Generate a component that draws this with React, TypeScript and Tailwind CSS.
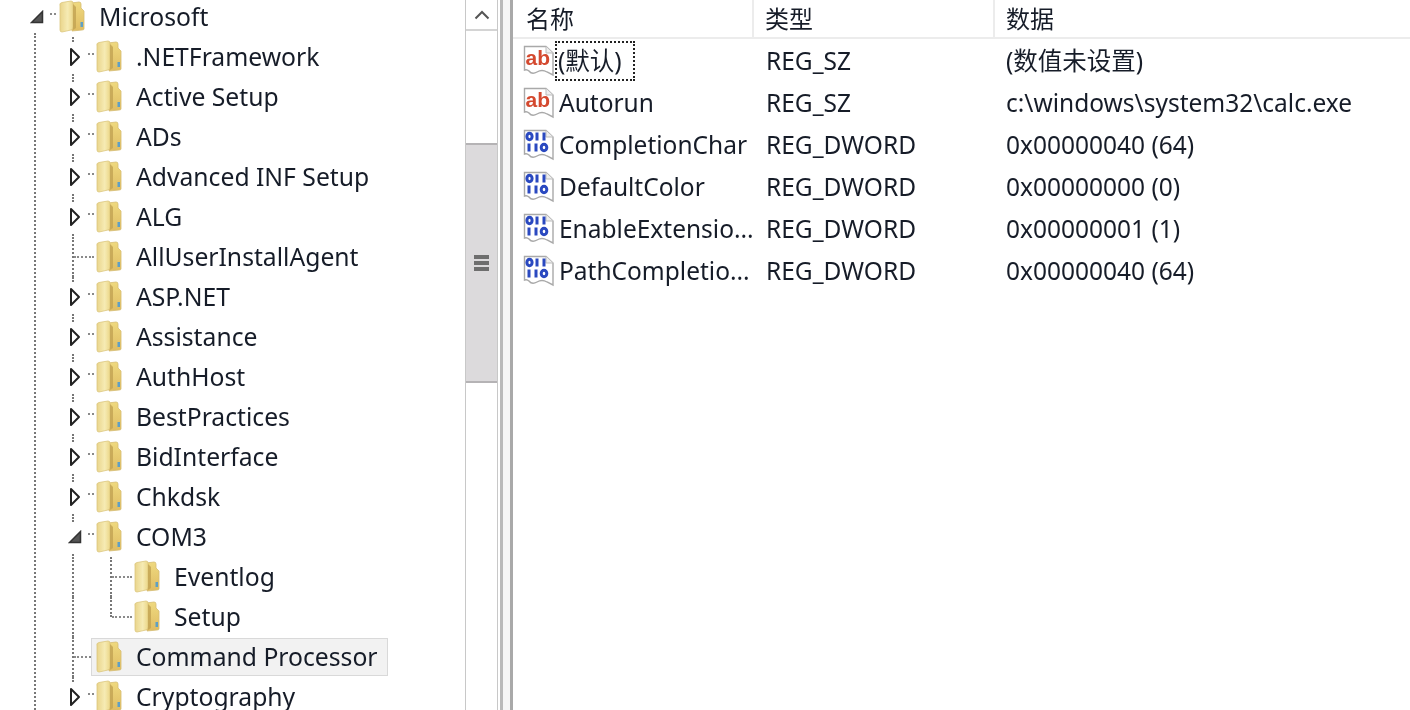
import { FC } from "react";

interface TreeRow {
  label: string;
  depth: number;
  expander?: "open" | "closed";
  selected?: boolean;
  last?: boolean;
}

const treeRows: TreeRow[] = [
  { label: "Microsoft", depth: 0, expander: "open" },
  { label: ".NETFramework", depth: 1, expander: "closed" },
  { label: "Active Setup", depth: 1, expander: "closed" },
  { label: "ADs", depth: 1, expander: "closed" },
  { label: "Advanced INF Setup", depth: 1, expander: "closed" },
  { label: "ALG", depth: 1, expander: "closed" },
  { label: "AllUserInstallAgent", depth: 1 },
  { label: "ASP.NET", depth: 1, expander: "closed" },
  { label: "Assistance", depth: 1, expander: "closed" },
  { label: "AuthHost", depth: 1, expander: "closed" },
  { label: "BestPractices", depth: 1, expander: "closed" },
  { label: "BidInterface", depth: 1, expander: "closed" },
  { label: "Chkdsk", depth: 1, expander: "closed" },
  { label: "COM3", depth: 1, expander: "open" },
  { label: "Eventlog", depth: 2 },
  { label: "Setup", depth: 2, last: true },
  { label: "Command Processor", depth: 1, selected: true },
  { label: "Cryptography", depth: 1, expander: "closed" },
];

const values = [
  { name: "(默认)", type: "REG_SZ", data: "(数值未设置)", kind: "sz", focused: true },
  { name: "Autorun", type: "REG_SZ", data: "c:\\windows\\system32\\calc.exe", kind: "sz" },
  { name: "CompletionChar", type: "REG_DWORD", data: "0x00000040 (64)", kind: "dword" },
  { name: "DefaultColor", type: "REG_DWORD", data: "0x00000000 (0)", kind: "dword" },
  { name: "EnableExtensio...", type: "REG_DWORD", data: "0x00000001 (1)", kind: "dword" },
  { name: "PathCompletio...", type: "REG_DWORD", data: "0x00000040 (64)", kind: "dword" },
];

const Folder: FC = () => (
  <svg width="28" height="33" viewBox="0 0 28 33" className="shrink-0">
    <defs>
      <linearGradient id="fl" x1="0" x2="1" y1="0" y2="0">
        <stop offset="0" stopColor="#e9d48a" />
        <stop offset="0.6" stopColor="#f6ebb4" />
        <stop offset="1" stopColor="#ecd788" />
      </linearGradient>
      <linearGradient id="fr" x1="0" x2="0" y1="0" y2="1">
        <stop offset="0" stopColor="#efd97f" />
        <stop offset="1" stopColor="#dfbc62" />
      </linearGradient>
    </defs>
    <path d="M13 3 L21 2 Q23 2 23 4 L23 8 L26 11 L26 29 Q26 30 24 30 L14 31 Z" fill="url(#fr)" stroke="#d5bc72" strokeWidth="0.8" />
    <path d="M2 6 Q1 3 4 2.5 L13 1 Q15 1 15 3 L15 27 Q15 29 13 30 L4 32 Q2 32 2 30 Z" fill="url(#fl)" stroke="#dcc67e" strokeWidth="0.8" />
    <path d="M15 4 L18 7 L18 28 L15 30 Z" fill="#c2a253" opacity="0.8" />
    <rect x="22.5" y="22" width="2.5" height="5" fill="#5f9fc4" />
  </svg>
);

const Expander: FC<{ type: "open" | "closed" }> = ({ type }) =>
  type === "open" ? (
    <svg width="14" height="14" viewBox="0 0 14 14">
      <path d="M12.5 1.5 L12.5 12.5 L1.5 12.5 Z" fill="#555" stroke="#333" strokeWidth="1.5" />
    </svg>
  ) : (
    <svg width="14" height="20" viewBox="0 0 14 20">
      <path d="M3 2 L11 10 L3 18 Z" fill="#fff" stroke="#222" strokeWidth="2" strokeLinejoin="round" />
    </svg>
  );

const dotV = "absolute border-l-2 border-dotted border-[#777]";
const dotH = "absolute border-t-2 border-dotted border-[#8a8a8a]";

const TreeItem: FC<{ row: TreeRow }> = ({ row }) => {
  const { depth, expander, selected, last } = row;
  return (
    <div className="relative flex h-10 items-center">
      {depth === 1 && expander && (
        <>
          <span className={`${dotV} left-[72px] top-0 h-[3px]`} />
          <span className={`${dotV} left-[72px] bottom-0 h-[3px]`} />
        </>
      )}
      {depth === 1 && !expander && (
        <>
          <span className={`${dotV} left-[72px] top-0 h-full`} />
          <span className={`${dotH} left-[74px] top-[19px] w-5`} />
        </>
      )}
      {depth === 2 && (
        <>
          <span className={`${dotV} left-[72px] top-0 h-full`} />
          <span className={`${dotV} left-[110px] top-0 ${last ? "h-[20px]" : "h-full"}`} />
          <span className={`${dotH} left-[112px] top-[19px] w-5`} />
        </>
      )}
      {selected && (
        <span className="absolute left-[91px] top-[1px] h-[38px] w-[297px] border border-[#d9d9d9] bg-[#f2f2f2]" />
      )}
      <div
        className={`relative flex items-center ${
          depth === 0 ? "pl-[58px]" : depth === 1 ? "pl-[95px]" : "pl-[133px]"
        }`}
      >
        {expander && (
          <span
            className={`absolute flex items-center justify-center ${
              depth === 0 ? "left-[30px]" : "left-[68px]"
            }`}
          >
            <Expander type={expander} />
          </span>
        )}
        {expander && (
          <span
            className={`${dotH} ${depth === 0 ? "left-[50px]" : "left-[88px]"} top-[15px] w-[6px]`}
          />
        )}
        <Folder />
        <span className="ml-[13px] whitespace-nowrap">{row.label}</span>
      </div>
    </div>
  );
};

const RegIcon: FC<{ kind: string }> = ({ kind }) => (
  <svg width="32" height="32" viewBox="0 0 32 32" className="shrink-0">
    <path
      d="M1.5 1.5 L23 1.5 L30 8 L30 30 L24 27 Q19 24 14 27 Q9 30 6 26 Q4 24 1.5 25 Z"
      fill="#fff"
      stroke="#a9a9a9"
      strokeWidth="1.4"
    />
    <path d="M23 1.5 L23 8 L30 8" fill="#eee" stroke="#bbb" strokeWidth="1" />
    {kind === "sz" ? (
      <text
        x="2.5"
        y="20"
        fontFamily="'Liberation Sans', sans-serif"
        fontWeight="700"
        fontSize="21"
        fill="#d4492f"
      >
        ab
      </text>
    ) : (
      <g fill="none" stroke="#2a49c0" strokeWidth="3">
        <ellipse cx="6.5" cy="7.5" rx="2.6" ry="3.2" />
        <path d="M14 3.5 V11.5 M21 3.5 V11.5" />
        <path d="M6 14.5 V22.5 M13 14.5 V22.5" />
        <ellipse cx="21" cy="18.5" rx="2.8" ry="3.2" />
      </g>
    )}
  </svg>
);

const TreeScrollbar: FC = () => (
  <div className="flex h-full w-[33px] shrink-0 flex-col border-x border-[#c8c8c8] bg-white">
    <div className="flex h-[31px] shrink-0 items-center justify-center border-b-2 border-[#d4d4d4]">
      <svg width="16" height="10" viewBox="0 0 16 10">
        <path d="M1.5 8.5 L8 2 L14.5 8.5" fill="none" stroke="#555" strokeWidth="2" />
      </svg>
    </div>
    <div className="mt-[112px] flex h-[240px] shrink-0 flex-col items-center justify-center gap-[2px] border-y-2 border-[#b5b3b5] bg-[#dcdadc]">
      <span className="h-[4px] w-[15px] bg-[#6e6e6e]" />
      <span className="h-[4px] w-[15px] bg-[#6e6e6e]" />
      <span className="h-[4px] w-[15px] bg-[#6e6e6e]" />
    </div>
  </div>
);

const App: FC = () => {
  return (
    <div
      className="flex h-[710px] w-[1410px] overflow-hidden bg-white text-[#161c28] blur-[0.5px] [font-family:'Noto_Sans','Noto_Sans_CJK_SC',sans-serif]"
    >
      <div className="relative h-full w-[465px] shrink-0 overflow-hidden text-[24.7px]">
        <div className="-mt-[3px]">
          {treeRows.map((row) => (
            <TreeItem key={row.label} row={row} />
          ))}
        </div>
        <span className={`${dotV} left-[34px] top-[33px] bottom-0`} />
      </div>

      <TreeScrollbar />

      <div className="flex h-full w-[15px] shrink-0">
        <span className="ml-[2px] w-[3px] bg-[#b9b9b9]" />
        <span className="w-[7px] bg-[#f5f5f5]" />
        <span className="w-[3px] bg-[#a9a9a9]" />
      </div>

      <div className="min-w-0 flex-1 text-[24.5px]">
        <div className="flex h-[39px] items-center border-b-2 border-[#ececec] text-[24px]">
          <div className="flex h-full w-[241px] items-center border-r-2 border-[#ececec] pl-[13px]">名称</div>
          <div className="flex h-full w-[241px] items-center border-r-2 border-[#ececec] pl-[11px]">类型</div>
          <div className="flex h-full flex-1 items-center pl-[11px]">数据</div>
        </div>
        <div className="mt-px">
          {values.map((v) => (
            <div key={v.name} className="flex h-[42px] items-center">
              <div className="flex w-[241px] items-center pl-[10px]">
                <RegIcon kind={v.kind} />
                <span
                  className={`whitespace-nowrap ${
                    v.focused ? "flex h-10 w-[80px] items-center border-2 border-dotted border-[#222] pl-[1px]" : "pl-[4px]"
                  }`}
                >
                  {v.name}
                </span>
              </div>
              <div className="w-[241px] whitespace-nowrap pl-[12px]">{v.type}</div>
              <div className="whitespace-nowrap pl-[11px]">{v.data}</div>
            </div>
          ))}
        </div>
      </div>
    </div>
  );
};

export default App;
